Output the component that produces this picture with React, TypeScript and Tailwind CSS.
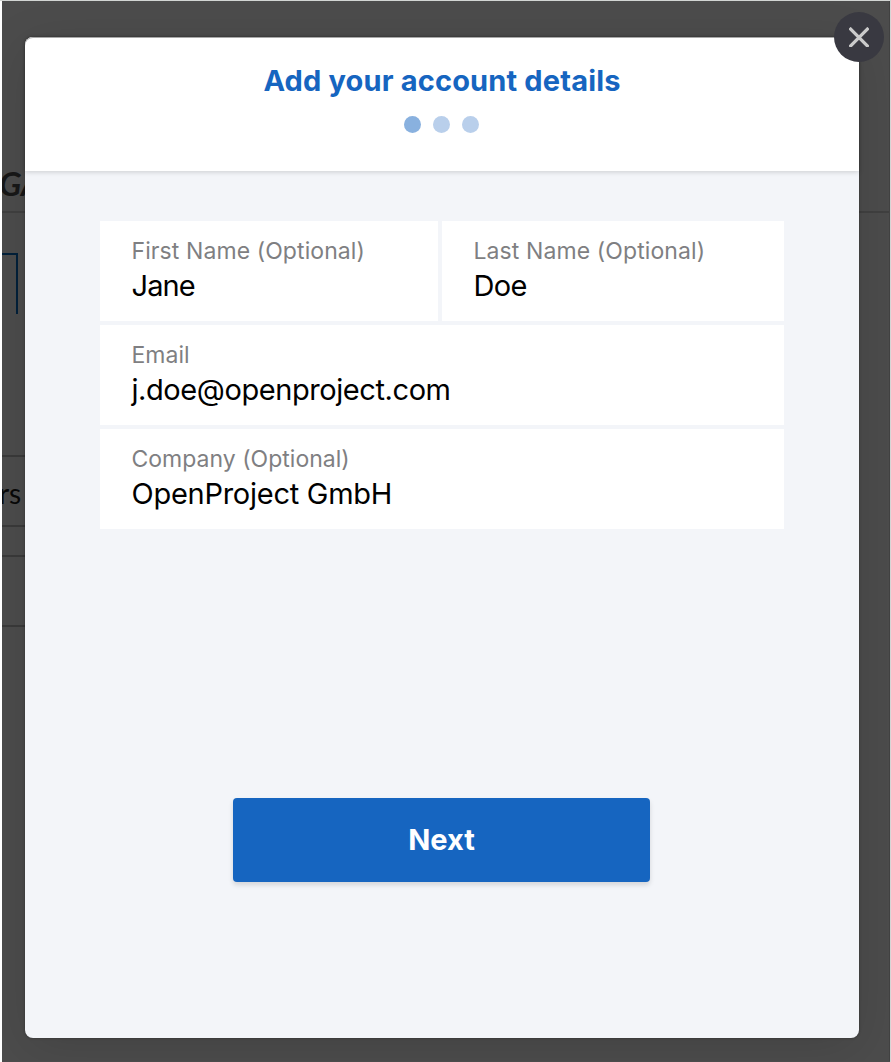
import React from "react";

type FieldProps = { label: string; value: string; labelClass: string; valueClass: string; className?: string };

function Field({ label, value, labelClass, valueClass, className = "" }: FieldProps) {
  return (
    <div className={`flex h-[100px] flex-col bg-white pt-[16px] pl-[31.5px] ${className}`}>
      <span className={`h-[28px] text-[23px] leading-[28px] whitespace-nowrap text-[#7f7f82] ${labelClass}`}>{label}</span>
      <span className={`h-[36px] pt-[3px] text-[29px] leading-[36px] whitespace-nowrap text-black ${valueClass}`}>{value}</span>
    </div>
  );
}

export default function App() {
  return (
    <div className="h-[1062px] w-[891px] overflow-hidden bg-[#d2d5d3] pt-px font-['Inter',sans-serif]">
      <div className="h-[1061px] border-r border-l-2 border-r-[#d5d5d5] border-l-white bg-[#4c4c4c]">
        <div className="flex h-[1060px] overflow-hidden border-r border-r-[#414141]">
          <aside className="flex w-[23px] shrink-0 flex-col overflow-hidden">
            <div className="flex h-[212px] items-end border-b-2 border-[#404040]">
              <span className="-ml-[3px] h-[48px] font-['Lato',sans-serif] text-[33px] leading-[40px] font-bold whitespace-nowrap text-[#171717] italic">GA</span>
            </div>
            <div className="mt-[40px] h-[61px] w-[16px] border-t-2 border-r-2 border-[#02203a]" />
            <div className="mt-[141px] flex h-[72px] items-center border-y-2 border-[#3a3a3a]">
              <span className="-ml-[3px] pt-[4px] font-['Lato',sans-serif] text-[28px] leading-[36px] text-[#080808]">rs</span>
            </div>
            <div className="mt-[28px] h-[72px] border-y-2 border-[#3a3a3a]" />
          </aside>

          <main className="relative mt-[36px] flex h-[1001px] w-[834px] shrink-0 flex-col rounded-[8px] bg-[#f3f5f9] shadow-[0_10px_50px_rgba(0,0,0,0.12),0_0_3px_rgba(0,0,0,0.3)]">
            <header className="flex h-[134px] shrink-0 flex-col items-center rounded-t-[8px] bg-white pt-[26px] shadow-[0_1px_5px_rgba(0,0,0,0.17),inset_0_1px_0_#a8a8a8]">
              <h1 className="h-[36px] text-[29px] leading-[36px] font-bold tracking-[0.16px] whitespace-nowrap text-[#1665c0]">Add your account details</h1>
              <div className="mt-[17.4px] mr-[1px] flex gap-[12.3px]">
                <i className="size-[17px] rounded-full bg-[#89b1df]" />
                <i className="size-[17px] rounded-full bg-[#b9cfeb]" />
                <i className="size-[17px] rounded-full bg-[#b9cfeb]" />
              </div>
            </header>

            <form className="mx-[75px] mt-[50px] flex flex-col gap-[4px]">
              <div className="flex gap-[4px]">
                <Field label="First Name (Optional)" value="Jane" labelClass="tracking-[0.09px]" valueClass="tracking-[-0.9px]" className="w-[338px]" />
                <Field label="Last Name (Optional)" value="Doe" labelClass="tracking-[0.1px]" valueClass="tracking-[-0.6px]" className="w-[342px]" />
              </div>
              <Field label="Email" value="j.doe@openproject.com" labelClass="tracking-[0px]" valueClass="tracking-[-0.42px]" />
              <Field label="Company (Optional)" value="OpenProject GmbH" labelClass="tracking-[0.01px]" valueClass="tracking-[-0.26px]" />
            </form>

            <button className="mt-[269px] ml-[208px] h-[84px] w-[417px] rounded-[4px] bg-[#1665c0] text-[29px] leading-[36px] font-bold text-white shadow-[0_3px_5px_rgba(0,0,0,0.13)]">Next</button>

            <button aria-label="Close" className="absolute -top-[25px] -right-[25px] flex size-[50px] items-center justify-center rounded-full bg-[#393941]">
              <svg viewBox="0 0 20 20" className="size-[20px]" fill="none" stroke="#cbcbcb" strokeWidth="3.3">
                <path d="M.5 1 19.5 20M19.5 1 .5 20" />
              </svg>
            </button>
          </main>

          <aside className="grow">
            <div className="h-[212px] border-b-2 border-[#404040]" />
          </aside>
        </div>
      </div>
    </div>
  );
}
